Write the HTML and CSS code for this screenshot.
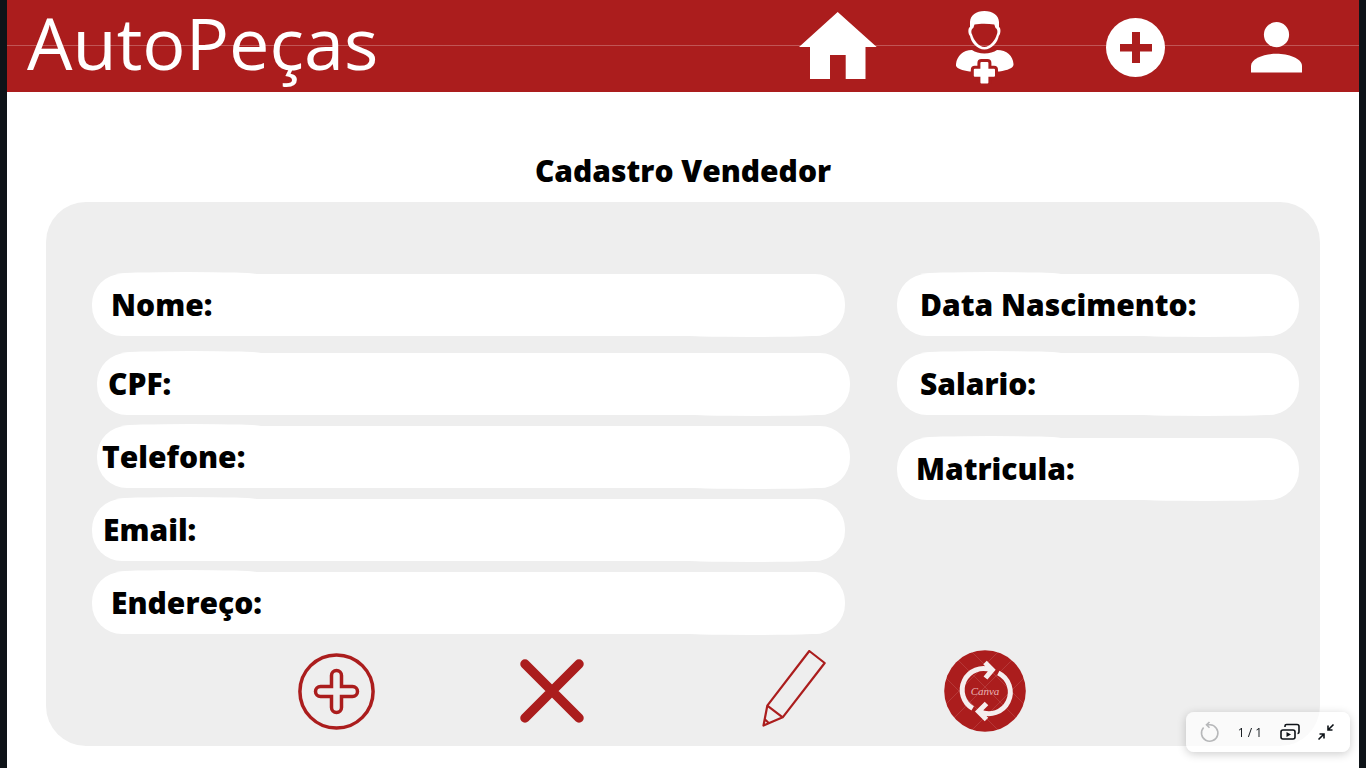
FILE: index.html
```html
<!DOCTYPE html>
<html lang="pt-BR">
<head>
<meta charset="utf-8">
<title>AutoPeças - Cadastro Vendedor</title>
<link rel="stylesheet" href="styles.css">
</head>
<body>
<div class="page">
  <header class="topbar">
    <div class="brand">AutoPeças</div>
    <nav class="menu">
      <a href="#inicio" aria-label="Início">
        <svg width="78" height="71" viewBox="0 0 78 71"><path d="M38.7 0 77.7 35H66.5V67H46.7V43H31V67H11V35H0Z"/></svg>
      </a>
      <a href="#vendedor" aria-label="Cadastrar vendedor">
        <svg width="58" height="73" viewBox="0 0 58 73">
          <path fill-rule="evenodd" d="M28.4 0C20 0 14.500 4 14 11V16C11.700 17 12 23 14 25C15 31 21 38.500 28.400 38.500S41.800 31 42.800 25C44.800 23 45.100 17 43 16V11C42.500 4 36.800 0 28.400 0ZM18.500 13.500C24 12.500 32 12.500 38.300 13.500L39.500 17C41.800 18 41.800 22 40.800 23.500C39.500 29 34 36 28.400 36S17.500 29 16.100 23.500C15 22 15 18 17.300 17Z"/>
          <path d="M16 39C22 43.500 35 43.500 41 39C51 39 57 45 57.500 53C58 57 52 59 43.500 60.500H13.500C5 59 -1 57 0 53C1 45 7 39 16 39Z"/>
          <path class="halo" d="M25.400 52H31.400V58.700H38V64.700H31.400V71.500H25.400V64.700H18.800V58.700H25.400Z"/>
          <path class="cross" d="M25.400 52H31.400V58.700H38V64.700H31.400V71.500H25.400V64.700H18.800V58.700H25.400Z"/>
        </svg>
      </a>
      <a href="#adicionar" aria-label="Adicionar">
        <svg width="59" height="59" viewBox="0 0 59 59"><circle cx="29.500" cy="29.500" r="29.500"/><path class="red" d="M26 14H34V26H46V33.500H34V45H26V33.500H14V26H26Z"/></svg>
      </a>
      <a href="#perfil" aria-label="Perfil">
        <svg width="51" height="51" viewBox="0 0 51 51"><circle cx="25.500" cy="12.700" r="12.600"/><path d="M0 50.500V44C0 36 14 31.700 25.500 31.700S51 36 51 44V50.500Z"/></svg>
      </a>
    </nav>
  </header>

  <main class="content">
    <h1>Cadastro Vendedor</h1>
    <form class="panel">
      <div class="fields">
        <div class="column">
          <div class="field inset-md"><label for="nome">Nome:</label><input id="nome" type="text"></div>
          <div class="field shifted spaced inset-sm"><label for="cpf">CPF:</label><input id="cpf" type="text"></div>
          <div class="field shifted inset-xs"><label for="telefone">Telefone:</label><input id="telefone" type="tel"></div>
          <div class="field inset-sm"><label for="email">Email:</label><input id="email" type="email"></div>
          <div class="field inset-md"><label for="endereco">Endereço:</label><input id="endereco" type="text"></div>
        </div>
        <div class="column">
          <div class="field inset-lg"><label for="nascimento">Data Nascimento:</label><input id="nascimento" type="text"></div>
          <div class="field spaced inset-lg"><label for="salario">Salario:</label><input id="salario" type="text"></div>
          <div class="field apart inset-md"><label for="matricula">Matricula:</label><input id="matricula" type="text"></div>
        </div>
      </div>
      <div class="actions">
        <button type="button" aria-label="Adicionar">
          <svg class="line" width="78" height="78" viewBox="0 -1 78 78" stroke-width="3.500"><circle cx="38.500" cy="38.500" r="36.600"/><path d="M33.500 33.500V22.500A5 5 0 0 1 43.500 22.500V33.500H54.500A5 5 0 0 1 54.500 43.500H43.500V54.500A5 5 0 0 1 33.500 54.500V43.500H22.500A5 5 0 0 1 22.500 33.500Z"/></svg>
        </button>
        <button type="button" aria-label="Excluir">
          <svg class="line" width="64" height="64" viewBox="0 0 64 64" stroke-width="9.500" stroke-linecap="round"><path d="M5 5 59 59M59 5 5 59"/></svg>
        </button>
        <button type="button" aria-label="Editar">
          <svg class="line" width="64" height="82" viewBox="0 0 64 82" stroke-width="2.200" stroke-linejoin="round"><path d="M47.300 1 62.700 13 20.700 67.300 1.500 75.500 5.300 55.700ZM5.300 55.700 20.700 67.300M2.500 69 7 73.300"/></svg>
        </button>
        <button type="button" aria-label="Atualizar">
          <svg width="82" height="82" viewBox="0 0 82 82">
            <circle class="disc" cx="41" cy="41" r="40.800"/>
            <path class="mesh" d="M14 10 72 68M28 2 80 54M2 28 54 80M68 10 10 68M54 2 2 54M80 28 28 80"/>
            <path class="arrows" d="M28.700 58.300A21.300 21.300 0 0 1 47 20M41 12.500 48.300 19.800 41.500 28M54.300 23A21.300 21.300 0 0 1 35.500 61.500M42.500 53.500 34.500 61.500 42.500 69.500"/>
            <text x="41" y="45" text-anchor="middle">Canva</text>
          </svg>
        </button>
      </div>
    </form>
  </main>
</div>

<div class="viewer">
  <button type="button" aria-label="Reiniciar" disabled>
    <svg width="20" height="22" viewBox="0 0 20 22"><path d="M3.600 6.500A8.200 8.200 0 1 0 10 3.800H6.500M9.500 1 6.500 3.800 9.500 6.800"/></svg>
  </button>
  <span>1 / 1</span>
  <button type="button" aria-label="Apresentar">
    <svg width="20" height="18" viewBox="0 0 20 18"><rect x="1" y="7" width="14" height="9" rx="2"/><path d="M5 4V3Q5 1.500 6.500 1.500H17Q19 1.500 19 3.500V8.500Q19 10.500 17.500 10.500"/><path class="solid" d="M6.500 9V14L11 11.500Z"/></svg>
  </button>
  <button type="button" aria-label="Sair da tela cheia">
    <svg width="18" height="18" viewBox="0 0 18 18"><path d="M16.500 1.500 11 7M11 2.500V7H15.500M1.500 16.500 7 11M2.500 11H7V15.500"/></svg>
  </button>
</div>
</body>
</html>
```
FILE: styles.css
```css
:root {
  --red: #ab1d1d;
  --dark: #0e1318;
}

* {
  box-sizing: border-box;
}

body {
  margin: 0;
  padding: 0 7px;
  background: var(--dark);
  color: #000;
  font-family: "Open Sans", "Noto Sans", sans-serif;
}

button {
  padding: 0;
  border: 0;
  background: none;
  cursor: pointer;
}

svg {
  display: block;
}

.page {
  min-height: 100vh;
  padding-bottom: 22px;
  background: #fff;
}

.topbar {
  display: flex;
  align-items: center;
  justify-content: space-between;
  height: 92px;
  padding: 0 19px 0 20px;
  background: linear-gradient(rgba(255, 255, 255, 0.25), rgba(255, 255, 255, 0.25)) 0 45px / 100% 1px no-repeat var(--red);
}

.brand {
  padding-bottom: 8px;
  color: #fff;
  font-size: 72px;
  line-height: 84px;
}

.menu {
  display: grid;
  grid-template-columns: 146px 147px 155px 127px;
  align-items: center;
  justify-items: center;
  padding-top: 2px;
  fill: #fff;
}

.red {
  fill: var(--red);
}

.halo {
  fill: var(--red);
  stroke: var(--red);
  stroke-width: 8;
  stroke-linejoin: round;
}

.cross {
  stroke: #fff;
  stroke-width: 2;
  stroke-linejoin: round;
}

.content {
  padding: 58px 39px 0;
}

h1 {
  margin: 0 0 10px;
  font-size: 30px;
  font-weight: 800;
  line-height: 42px;
  text-align: center;
}

.panel {
  padding: 72px 0 14px;
  border-radius: 40px;
  background: #eee;
}

.fields {
  display: grid;
  grid-template-columns: minmax(0, 758fr) minmax(0, 402fr);
  gap: 47px;
  padding: 0 21px 0 46px;
}

.column {
  display: flex;
  flex-direction: column;
}

.field {
  position: relative;
  display: flex;
  align-items: center;
  height: 62px;
  border-radius: 30px;
  background: #fff;
}

.column:first-child .field {
  margin-right: 5px;
}

.column .field.shifted {
  margin-right: 0;
  margin-left: 5px;
}

.field + .field {
  margin-top: 11px;
}

.field + .spaced {
  margin-top: 17px;
}

.field + .apart {
  margin-top: 23px;
}

.inset-xs { padding-left: 5px; }
.inset-sm { padding-left: 11px; }
.inset-md { padding-left: 19px; }
.inset-lg { padding-left: 23px; }

/* Soft bulges that give each field its hand-cut outline */
.field::before,
.field::after {
  content: "";
  position: absolute;
  width: 140px;
  height: 4px;
  border-radius: 50%;
  background: #fff;
}

.field::before {
  top: -2px;
  left: 24px;
}

.field::after {
  right: 24px;
  bottom: -1px;
}

.field label {
  font-size: 30px;
  font-weight: 800;
  line-height: 42px;
  white-space: nowrap;
}

.field input {
  flex: 1;
  min-width: 0;
  margin: 0 20px 0 8px;
  padding: 0;
  border: 0;
  outline: 0;
  background: transparent;
  font: inherit;
  font-size: 30px;
}

.actions {
  display: grid;
  grid-template-columns: 183fr 215fr 216fr 268fr 114fr 278fr;
  align-items: center;
  justify-items: center;
  margin-top: 16px;
}

.actions button:first-child {
  grid-column: 2;
}

.line {
  fill: none;
  stroke: var(--red);
}

.disc {
  fill: var(--red);
}

.mesh {
  fill: none;
  stroke: #fff;
  stroke-opacity: 0.12;
}

.arrows {
  fill: none;
  stroke: #f5eeee;
  stroke-width: 5px;
}

.disc ~ text {
  fill: #e9b5b5;
  font-family: "Liberation Serif", serif;
  font-size: 11px;
  font-style: italic;
}

.viewer {
  position: fixed;
  right: 16px;
  bottom: 16px;
  display: grid;
  grid-template-columns: 40px 40px 40px 32px;
  align-items: center;
  justify-items: center;
  height: 40px;
  padding: 0 8px 0 4px;
  border-radius: 8px;
  background: rgba(255, 255, 255, 0.7);
  box-shadow: 0 2px 10px rgba(0, 0, 0, 0.2);
  color: var(--dark);
  font-size: 12px;
}

.viewer svg {
  fill: none;
  stroke: var(--dark);
  stroke-width: 1.6;
}

.viewer button:disabled svg {
  stroke: #b7b8ba;
}

.viewer .solid {
  fill: var(--dark);
  stroke: none;
}
```
